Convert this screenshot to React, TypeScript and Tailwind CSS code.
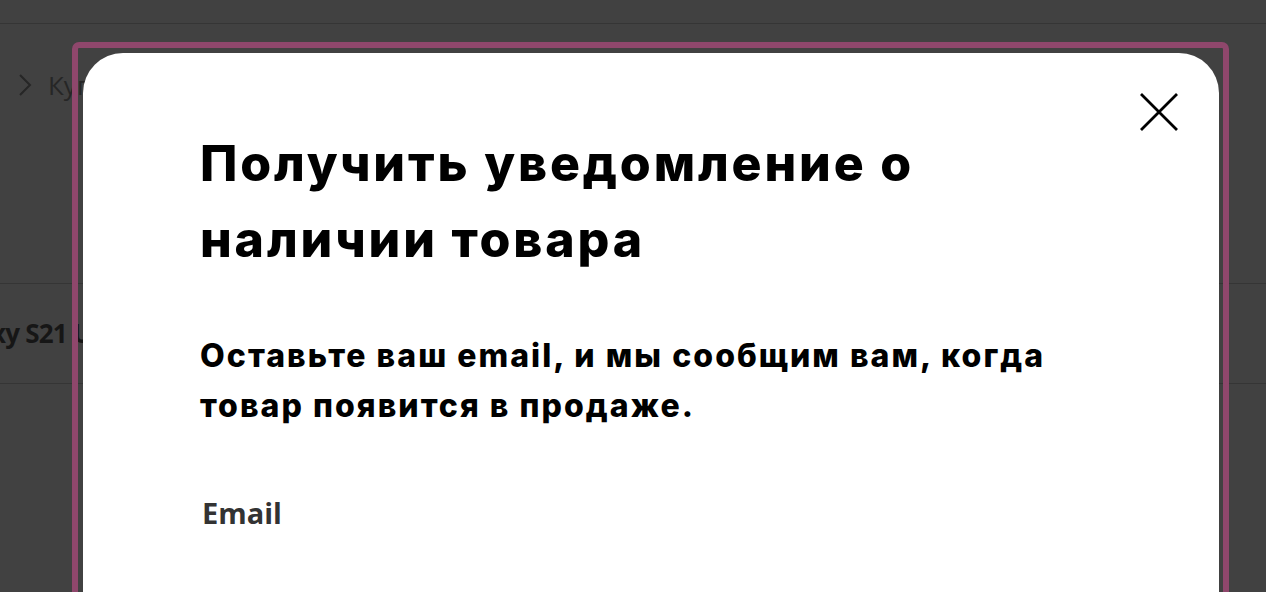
import React from "react";

export default function App() {
  return (
    <div className="relative w-[1266px] h-[592px] overflow-hidden bg-[#414141]" style={{ fontFamily: "'Noto Sans', sans-serif" }}>
      {/* page behind overlay */}
      <div className="flex flex-col">
        <div className="h-[24px] border-b border-[#353535]" />
        <div className="h-[260px] border-b border-[#353535] flex items-start pt-[44px] pl-[16px] gap-[14px]">
          <svg width="18" height="26" viewBox="0 0 18 26" className="mt-[4px]">
            <path d="M4 3 L14 13 L4 23" fill="none" stroke="#262626" strokeWidth="2" />
          </svg>
          <span className="text-[26px] leading-[34px] text-[#262626]" style={{ fontFamily: "'Open Sans', sans-serif" }}>Купить</span>
        </div>
        <div className="h-[100px] border-b border-[#353535] flex items-center ml-[-64px]">
          <span className="text-[26px] font-bold tracking-[-0.8px] text-[#161616]" style={{ fontFamily: "'Open Sans', sans-serif" }}>Galaxy S21 Ultra</span>
        </div>
      </div>

      {/* modal with focus outline */}
      <div className="absolute left-[72px] top-[42px] w-[1157px] h-[600px] border-[6px] border-[#8f476c] rounded-[7px] pt-[5px] pl-[5px] pr-[4px]">
        <div className="relative h-full bg-white rounded-[40px] pl-[117px] pt-[72px]">
          <button className="absolute right-[41px] top-[40px] w-[38px] h-[38px]">
            <svg width="38" height="38" viewBox="0 0 38 38">
              <path d="M1 1 L37 37 M37 1 L1 37" stroke="#000" strokeWidth="2.8" fill="none" />
            </svg>
          </button>
          <h1
            className="text-[50px] leading-[76px] font-extrabold text-black whitespace-nowrap tracking-[2.85px]"
            style={{ fontFamily: "Inter, sans-serif" }}
          >
            Получить уведомление о
            <br />
            наличии товара
          </h1>
          <p
            className="mt-[54px] text-[32px] leading-[50px] font-extrabold text-black whitespace-nowrap tracking-[2.05px]"
            style={{ fontFamily: "Inter, sans-serif" }}
          >
            Оставьте ваш email, и мы сообщим вам, когда
            <br />
            товар появится в продаже.
          </p>
          <label
            className="block mt-[64px] text-[29px] leading-[36px] font-bold text-[#333333] pl-[2px]"
            style={{ fontFamily: "'Open Sans', sans-serif" }}
          >
            Email
          </label>
        </div>
      </div>
    </div>
  );
}
